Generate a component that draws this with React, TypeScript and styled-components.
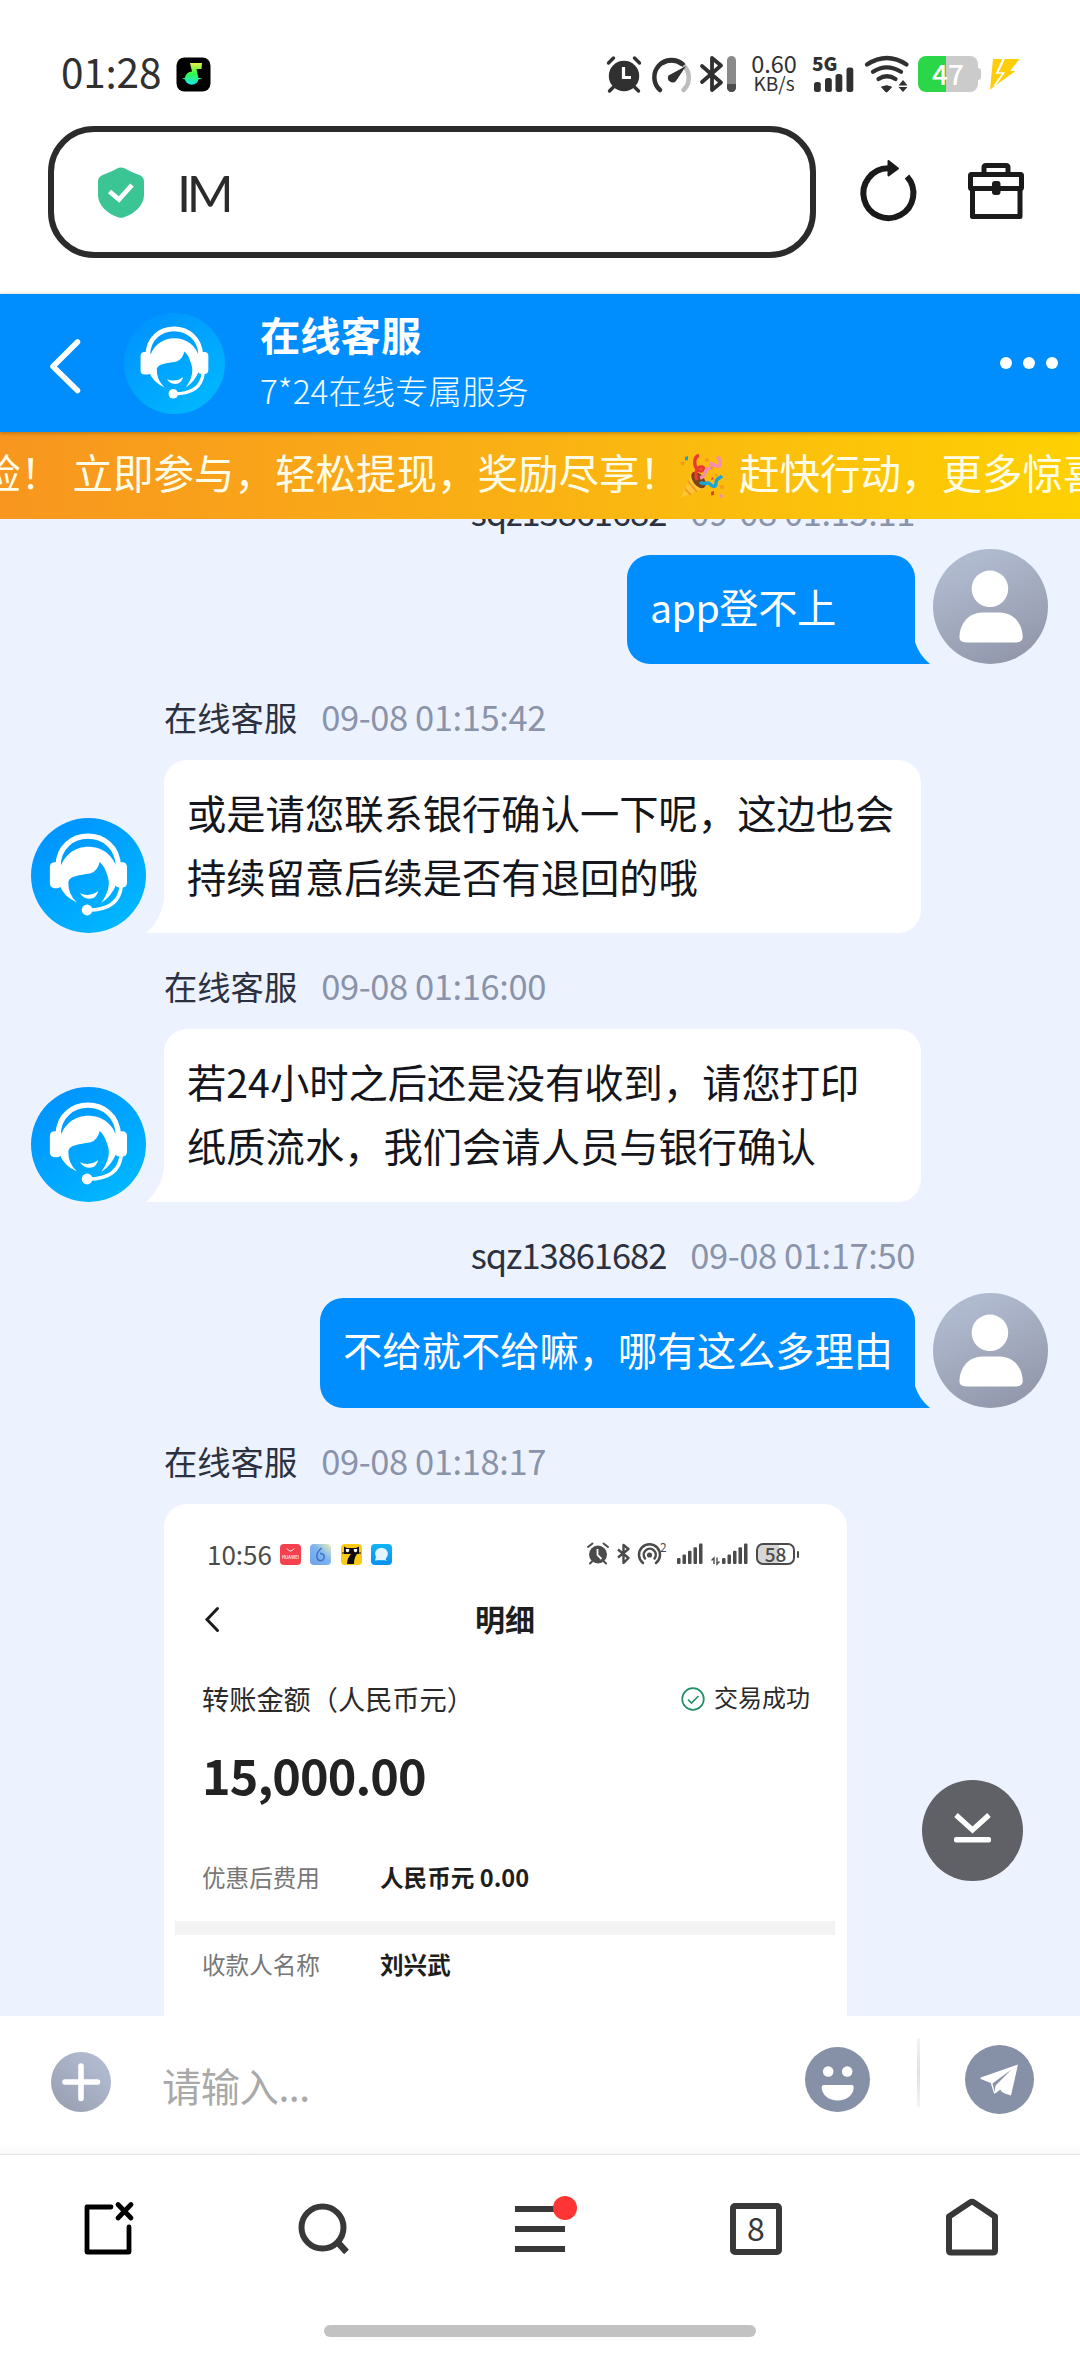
import React from "react";
import styled, { createGlobalStyle } from "styled-components";

const Global = createGlobalStyle`
  * { box-sizing: border-box; }
  body {
    margin: 0;
    background: #fff;
    font-family: "Noto Sans CJK SC", "Noto Sans", sans-serif;
    -webkit-font-smoothing: antialiased;
  }
  svg { display: block; flex: none; overflow: visible; }
`;

const Screen = styled.div`
  width: 1080px;
  height: 2358px;
  display: flex;
  flex-direction: column;
  overflow: hidden;
  background: #fff;
`;

/* ---------- shared pieces ---------- */

interface IconProps {
  box: string;
  children: React.ReactNode;
}

/* Draws at the natural size of its view box, one unit to one pixel. */
const Icon = ({ box, children }: IconProps) => {
  const [, , w, h] = box.split(" ");
  return (
    <svg width={w} height={h} viewBox={box} fill="none">
      {children}
    </svg>
  );
};

/* $lift raises the glyphs above the centre line of their row. */
const Label = styled.span<{
  $size: number;
  $color?: string;
  $weight?: number;
  $spacing?: number;
  $font?: string;
  $line?: number;
  $lift?: number;
}>`
  flex: none;
  white-space: pre;
  font-size: ${(p) => p.$size}px;
  line-height: ${(p) => (p.$line ? `${p.$line}px` : "1")};
  margin-bottom: ${(p) => (p.$lift || 0) * 2}px;
  color: ${(p) => p.$color || "#1e1e1e"};
  font-weight: ${(p) => p.$weight || 400};
  letter-spacing: ${(p) => p.$spacing || 0}px;
  font-family: ${(p) => (p.$font ? `"${p.$font}", ` : "")}"Noto Sans CJK SC", sans-serif;
`;

/* ---------- system status bar ---------- */

const StatusBar = styled.header`
  height: 126px;
  flex: none;
  display: flex;
  align-items: center;
  justify-content: space-between;
  padding: 22px 60px 0 61px;
`;

const StatusSide = styled.div`
  display: flex;
  align-items: center;
  height: 44px;
`;

const Gap = styled.div<{ $w: number }>`
  width: ${(p) => p.$w}px;
  flex: none;
`;

const Speed = styled.div`
  display: flex;
  flex-direction: column;
  align-items: center;
  width: 48px;
  padding-bottom: 3px;
`;

const INK = "#303030";

const MusicIcon = () => (
  <Icon box="177 56 35 35">
    <defs>
      <linearGradient id="note" x1="0" y1="0" x2="0" y2="1">
        <stop offset="0" stopColor="#e8f046" />
        <stop offset="0.5" stopColor="#2dfc4a" />
        <stop offset="1" stopColor="#19e6f0" />
      </linearGradient>
    </defs>
    <rect x="177.5" y="56.5" width="34" height="34" rx="8" fill="#000" />
    <path
      d="M191 62h12l-.5 6h-5l1 5 1 4h4l-4 1.500a7 7 0 0 1-13.500 0l-3-1 3-.8a7 7 0 0 1 7-6.200z"
      fill="url(#note)"
    />
  </Icon>
);

const AlarmIcon = () => (
  <Icon box="606 56 36 36">
    <circle cx="624" cy="76" r="15.200" fill={INK} />
    <path d="M608.500 63l5-5M639.500 63l-5-5M609.500 91l4-4M638.500 91l-4-4" stroke={INK} strokeWidth="3.400" strokeLinecap="round" />
    <path d="M623.500 67v10.500h7.500" stroke="#fff" strokeWidth="3.200" />
  </Icon>
);

const GaugeIcon = () => (
  <Icon box="652 56 40 36">
    <path d="M660 90a17 17 0 0 1 23-25.500" stroke={INK} strokeWidth="4.500" strokeLinecap="round" />
    <path d="M685 67a17 17 0 0 1-1.500 23" stroke="#bdbdbd" strokeWidth="4.500" strokeLinecap="round" />
    <path d="M662 63.500q11-6 20 1" stroke={INK} strokeWidth="4" />
    <path d="M686 66l-10 15a4.700 4.700 0 0 1-7.500-5.500z" fill={INK} />
  </Icon>
);

const BluetoothIcon = () => (
  <Icon box="700 56 37 36">
    <path d="M702 66l19 16.500-9 7.500v-32l9 7.500-19 16.500" stroke={INK} strokeWidth="3.800" strokeLinejoin="round" strokeLinecap="round" />
    <rect x="727" y="56" width="9" height="36" rx="4.500" fill="#8a8a8a" />
    <path d="M727 84h9v3.500a4.500 4.500 0 0 1-9 0z" fill="#4d4d4d" />
  </Icon>
);

const SignalBlock = styled.div`
  display: flex;
  flex-direction: column;
  justify-content: space-between;
  width: 43px;
  height: 36px;
`;

const SignalIcon = () => (
  <Icon box="812 72 43 20">
    {[
      [814, 82],
      [825, 78],
      [835.5, 74],
      [846.5, 67.5],
    ].map(([x, y]) => (
      <rect key={x} x={x} y={y} width="6.800" height={92 - y} rx="2.500" fill={INK} />
    ))}
  </Icon>
);

const WifiIcon = () => (
  <Icon box="865 56 44 36">
    <g stroke={INK} strokeWidth="4.200" strokeLinecap="round">
      <path d="M867 64.500q20-13 39.500 0" />
      <path d="M873 71.800q13.500-9 28 0" />
      <path d="M878.500 79q8.500-5.500 17 0" />
    </g>
    <path d="M881.500 87q5-2.500 10 0l-4 4.500q-1 1-2 0z" fill={INK} stroke={INK} />
    <path d="M903 80l4.500 5.500h-9zM903 92l4.500-5h-9z" fill={INK} />
  </Icon>
);

const Battery = styled.div`
  position: relative;
  display: flex;
  align-items: center;
  justify-content: center;
  width: 60px;
  height: 36px;
  border-radius: 8px;
  background: linear-gradient(90deg, #2bd648 0 28px, #cbcbcb 28px);
  &::after {
    content: "";
    position: absolute;
    left: 60px;
    top: 12px;
    width: 3px;
    height: 12px;
    border-radius: 0 3px 3px 0;
    background: #cbcbcb;
  }
`;

const ChargeIcon = () => (
  <Icon box="990 59 30 32">
    <path d="M993 60h9.500l-6.500 14h6.500l-12.500 16.500zM1005 60h14.500l-9.500 12h5.500l-25.500 18.500 8-10 4-6h-4z" fill="#ffcd0a" />
    <path d="M1003.500 59.500l-6.500 14.500h6.500l-9 13" stroke="#fff" strokeWidth="1.600" />
  </Icon>
);

/* ---------- browser address bar ---------- */

const AddressRow = styled.div`
  height: 168px;
  flex: none;
  display: flex;
  align-items: flex-start;
  padding-left: 48px;
`;

const AddressBox = styled.div`
  width: 768px;
  height: 132px;
  border: 6px solid #2b2b2b;
  border-radius: 46px;
  display: flex;
  align-items: center;
  padding-left: 44px;
  gap: 33px;
`;

const AddressTools = styled.div`
  display: flex;
  align-items: center;
  height: 132px;
  padding: 0 0 3px 44px;
  gap: 52px;
`;

const ShieldIcon = () => (
  <Icon box="98 167 46 50">
    <path
      d="M117 168.500q4-2 8 0c5 3.200 10 4.700 15 6.700q4 2 4 6v14c0 10-10 19-20 22q-3 1-6 0c-10-3-20-12-20-22v-14q0-4 4-6c5-2 10-3.500 15-6.700z"
      fill="#3cc594"
    />
    <path d="M109.500 191.500l9.500 8 13-14.500" stroke="#fff" strokeWidth="4.800" />
  </Icon>
);

const ReloadIcon = () => (
  <Icon box="860 160 56 61">
    <path d="M907 176.500A25 25 0 1 1 888 168.200" stroke="#1a1a1a" strokeWidth="6" strokeLinecap="butt" />
    <path d="M888.500 161l9.500 7.500-9.500 7z" fill="#1a1a1a" stroke="#1a1a1a" strokeWidth="2" strokeLinejoin="round" />
  </Icon>
);

const ToolboxIcon = () => (
  <Icon box="968 163 56 56">
    <g stroke="#1a1a1a" strokeWidth="5" strokeLinejoin="round">
      <path d="M984 174v-6.500q0-2 2-2h20q2 0 2 2v6.500" />
      <rect x="970.500" y="174.500" width="51" height="14" rx="1" />
      <path d="M972.500 188v28.500h47.500v-28.500" />
    </g>
    <rect x="992" y="181" width="8.500" height="14" rx="3" fill="#1a1a1a" />
  </Icon>
);

/* ---------- chat header ---------- */

const ChatHeader = styled.div`
  position: relative;
  z-index: 2;
  height: 138px;
  flex: none;
  display: flex;
  align-items: center;
  background: #008eff;
  padding: 0 22px 0 50px;
  box-shadow: 0 1px 4px rgba(90, 60, 0, 0.45);
`;

const HeaderText = styled.div`
  display: flex;
  flex-direction: column;
  gap: 19px;
  flex: 1;
  margin-left: 35px;
  padding-bottom: 6px;
`;

const Dots = styled.div`
  display: flex;
  gap: 11px;
`;

const Dot = styled.i`
  width: 12px;
  height: 12px;
  border-radius: 50%;
  background: #fff;
`;

const AgentAvatar = ({ size }: { size: number }) => (
  <svg width={size} height={size} viewBox="0 0 100 100" fill="none">
    <defs>
      <linearGradient id="agentBg" x1="0.200" y1="0.100" x2="0.800" y2="0.900">
        <stop offset="0" stopColor="#0095ff" />
        <stop offset="1" stopColor="#00b6ff" />
      </linearGradient>
    </defs>
    <circle cx="50" cy="50" r="50" fill="url(#agentBg)" />
    <path d="M23.500 42C24 7 75 7 76 42" stroke="#fff" strokeWidth="4.600" />
    <rect x="16.400" y="38.500" width="10.500" height="22.500" rx="4" fill="#fff" />
    <rect x="73" y="38.500" width="10.500" height="22" rx="4" fill="#fff" />
    <path
      d="M25 46C30 18 70 18 75 46L74 58Q70 68 61 74Q71 60 66 49Q63.500 41 59.700 38.200Q58 46 52 48C46 49.500 33 49.500 32.500 56Q32 66 40 73.500Q29 69 25 59z"
      fill="#fff"
    />
    <path d="M42.500 65.500q8.500 3.500 16-2-1.500 6.500-7.500 6.800-5 0-8.500-4.800z" fill="#fff" />
    <path d="M78.500 59C77 74 66 80 50 80" stroke="#fff" strokeWidth="3.200" />
    <circle cx="48.800" cy="80" r="4.700" fill="#fff" />
  </svg>
);

const UserAvatar = ({ size }: { size: number }) => (
  <svg width={size} height={size} viewBox="0 0 100 100" fill="none">
    <defs>
      <linearGradient id="userBg" x1="0.300" y1="0.100" x2="0.700" y2="1">
        <stop offset="0" stopColor="#b0bacf" />
        <stop offset="1" stopColor="#9297aa" />
      </linearGradient>
    </defs>
    <circle cx="50" cy="50" r="50" fill="url(#userBg)" />
    <circle cx="49.500" cy="34.600" r="15.900" fill="#fff" />
    <path d="M23 77c0-12 8-21.800 20-21.800h15c12 0 20 9.800 20 21.800q0 4.300-7 4.300H30q-7 0-7-4.300z" fill="#fff" />
  </svg>
);

/* ---------- promotion ticker ---------- */

const Ticker = styled.div`
  height: 87px;
  flex: none;
  display: flex;
  align-items: center;
  overflow: hidden;
  background: linear-gradient(90deg, #f8961f, #fab313 52%, #fed102);
`;

const TickerTrack = styled.div`
  display: flex;
  align-items: center;
  flex: none;
  margin-left: -20px;
`;

const PartyIcon = () => (
  <svg width="44" height="44" viewBox="0 0 44 44" fill="none">
    <path d="M1 43.500L12 19Q24 24 25 34z" fill="#ffc636" />
    <path d="M5 35l6 6M8 27l9 11" stroke="#f29d1f" strokeWidth="2" />
    <ellipse cx="18.500" cy="26" rx="5.500" ry="9.500" transform="rotate(-38 18.500 26)" fill="#7c4318" />
    <path d="M17 26C14 18 18 12 22 13s0 6-4 3S13 3 19 1.500" stroke="#ea3a31" strokeWidth="3.400" />
    <path d="M20 24c8-2 3-8 8-9s4-2 3-5 9 7 9 0-1-5-3-7" stroke="#f18fae" strokeWidth="3.400" />
    <path d="M20 28c4 4 8-1 10 2s6 4 6-1 3-4 6-7" stroke="#1ba4d8" strokeWidth="3.400" />
    <path d="M5 3l3-1v4l-3 .5z" fill="#1b9fd0" />
    <g fill="#f19a1b">
      <circle cx="2.500" cy="9.500" r="2" />
      <circle cx="27" cy="6" r="1.900" />
      <circle cx="32" cy="14" r="1.600" />
      <circle cx="42" cy="33" r="1.900" />
      <circle cx="36" cy="21" r="1.500" />
    </g>
    <path d="M31 38l3-1v4l-3 .500zM32 23l2 2-3 1z" fill="#ea3a31" />
    <circle cx="41" cy="42" r="1.900" fill="#f18fae" />
  </svg>
);

/* ---------- conversation ---------- */

const ChatStage = styled.main`
  position: relative;
  height: 1497px;
  flex: none;
  overflow: hidden;
  background: #ecf3ff;
`;

const Messages = styled.div`
  display: flex;
  flex-direction: column;
  margin-top: -60px;
`;

const Entry = styled.section<{ $mine?: boolean }>`
  display: flex;
  flex-direction: column;
  align-items: ${(p) => (p.$mine ? "flex-end" : "flex-start")};
  padding: ${(p) => (p.$mine ? "0 32px 0 0" : "0 0 0 31px")};
`;

const Meta = styled.div<{ $mine?: boolean }>`
  height: 96px;
  display: flex;
  align-items: center;
  gap: 24px;
  padding-top: 9px;
  margin: ${(p) => (p.$mine ? "0 133px 0 0" : "0 0 0 133px")};
`;

/* The avatar may stand taller than a one-line bubble without pushing the row. */
const BubbleRow = styled.div<{ $h: number }>`
  height: ${(p) => p.$h}px;
  display: flex;
  align-items: flex-end;
  gap: 18px;
`;

const Bubble = styled.div<{ $mine?: boolean; $w: number; $h: number }>`
  position: relative;
  width: ${(p) => p.$w}px;
  height: ${(p) => p.$h}px;
  display: flex;
  flex-direction: column;
  justify-content: center;
  padding: 0 23px ${(p) => (p.$mine ? 8 : 5)}px;
  border-radius: ${(p) => (p.$mine ? "23px 23px 0 23px" : "23px 23px 23px 0")};
  background: ${(p) => (p.$mine ? "#008eff" : "#fff")};
`;

const Tail = styled.svg<{ $mine?: boolean }>`
  position: absolute;
  bottom: 0;
  ${(p) => (p.$mine ? "left: calc(100% - 1px);" : "right: calc(100% - 1px);")}
`;

const BubbleTail = ({ mine }: { mine?: boolean }) =>
  mine ? (
    <Tail $mine width="16" height="22" viewBox="0 0 16 22">
      <path d="M0 0H1Q5 13 16 22H0z" fill="#008eff" />
    </Tail>
  ) : (
    <Tail width="19" height="36" viewBox="0 0 19 36">
      <path d="M19 0H18Q16 22 0 36H19z" fill="#fff" />
    </Tail>
  );

interface MessageProps {
  name: string;
  time: string;
  lines: string[];
  width: number;
  height: number;
  mine?: boolean;
  spacing?: number;
}

const MetaLine = ({ name, time, mine }: { name: string; time: string; mine?: boolean }) => (
  <Meta $mine={mine}>
    <Label $size={mine ? 34.5 : 33.3} $spacing={mine ? -1.05 : 0} $color="#2c3140">
      {name}
    </Label>
    <Label $size={34.5} $spacing={-0.4} $color="#8a93aa">
      {time}
    </Label>
  </Meta>
);

const Message = ({ name, time, lines, width, height, mine, spacing }: MessageProps) => (
  <Entry $mine={mine}>
    <MetaLine name={name} time={time} mine={mine} />
    <BubbleRow $h={height}>
      {!mine && <AgentAvatar size={115} />}
      <Bubble $mine={mine} $w={width} $h={height}>
        {lines.map((line) => (
          <Label key={line} $size={39.3} $line={64} $spacing={spacing} $color={mine ? "#fff" : "#14161c"}>
            {line}
          </Label>
        ))}
        <BubbleTail mine={mine} />
      </Bubble>
      {mine && <UserAvatar size={115} />}
    </BubbleRow>
  </Entry>
);

/* ---------- picture message: transfer receipt ---------- */

const Receipt = styled.div`
  width: 683px;
  height: 600px;
  margin-left: 133px;
  border-radius: 23px 23px 0 0;
  background: #fff;
  display: flex;
  flex-direction: column;
  padding: 0 12px 0 11px;
`;

const ReceiptStatus = styled.div`
  display: flex;
  align-items: center;
  height: 22px;
  margin-top: 39px;
  padding: 0 40px 0 32px;
`;

const Badges = styled.div`
  display: flex;
  gap: 9.300px;
  margin-left: 8px;
`;

const AppBadge = styled.div<{ $bg: string }>`
  width: 21px;
  height: 21px;
  border-radius: 4px;
  overflow: hidden;
  display: flex;
  align-items: center;
  justify-content: center;
  background: ${(p) => p.$bg};
`;

const Stretch = styled.div`
  flex: 1;
`;

const ReceiptTitle = styled.div`
  display: grid;
  grid-template-columns: 74px 1fr 74px;
  align-items: center;
  justify-items: center;
  height: 44px;
  margin-top: 32px;
`;

const ReceiptRow = styled.div<{ $top: number }>`
  display: flex;
  align-items: center;
  height: 40px;
  margin-top: ${(p) => p.$top}px;
  padding: 0 25px 0 27px;
`;

const FieldName = styled.div`
  width: 178px;
  display: flex;
`;

const Rule = styled.div`
  height: 14px;
  margin-top: 23px;
  background: #f3f3f3;
`;

const SmallBattery = styled.div`
  position: relative;
  width: 39px;
  height: 22px;
  margin-left: 8px;
  border: 2px solid #4b4b4b;
  border-radius: 7px;
  display: flex;
  align-items: center;
  justify-content: center;
  background: linear-gradient(90deg, #d6d6d6 60%, #fff 60%);
  &::after {
    content: "";
    position: absolute;
    left: 39px;
    top: 6px;
    width: 2px;
    height: 7px;
    border-radius: 1px;
    background: #4b4b4b;
  }
`;

const GREY_INK = "#4b4b4b";

const ReceiptIcons = () => (
  <Icon box="587 1543 161 22">
    <circle cx="598" cy="1554.500" r="9" fill={GREY_INK} />
    <path d="M588 1547l4.500-3.500M608 1547l-4.500-3.500M590 1563.500l2-2M606 1563.500l-2-2" stroke={GREY_INK} strokeWidth="2" strokeLinecap="round" />
    <path d="M597.500 1549v6l4 4" stroke="#fff" strokeWidth="1.800" />
    <path d="M618 1549.500l10.500 8.500-5 5v-18l5 4-10.500 8.500" stroke={GREY_INK} strokeWidth="2.400" strokeLinejoin="round" />
    <g stroke={GREY_INK} strokeWidth="2.500" strokeLinecap="round">
      <path d="M643 1563a10.500 10.500 0 1 1 13 0" />
      <path d="M645 1558.500a6 6 0 1 1 9.500 0" />
    </g>
    <circle cx="649.500" cy="1555" r="2.600" fill={GREY_INK} />
    <text x="660" y="1551.500" fontSize="12" fill={GREY_INK} fontFamily="Noto Sans CJK SC, sans-serif">
      2
    </text>
    {[0, 1, 2, 3, 4].map((i) => (
      <React.Fragment key={i}>
        <rect x={677 + i * 5.5} y={1558 - i * 3.6} width="3.500" height={6 + i * 3.6} rx="1" fill={GREY_INK} />
        <rect x={722 + i * 5.5} y={1558 - i * 3.6} width="3.500" height={6 + i * 3.6} rx="1" fill={GREY_INK} />
      </React.Fragment>
    ))}
    <path d="M714 1564v-6l-2.500 2.500M717 1557.500v6.500l2.500-2.500" stroke={GREY_INK} strokeWidth="1.400" />
  </Icon>
);

const BadgeGlyphs = {
  bag: (
    <Icon box="0 0 21 21">
      <path d="M7 4.500q3.500 5 7 0" stroke="#fff" strokeWidth="1" />
      <text x="10.500" y="14.500" fontSize="4.200" fontWeight="700" textAnchor="middle" fill="#ffd9dc" fontFamily="Inter, sans-serif">
        HUAWEI
      </text>
    </Icon>
  ),
  six: (
    <Icon box="0 0 21 21">
      <path d="M11.500 4Q6 9 7 13a3.600 3.600 0 1 0 3-3.500" stroke="#3e72c4" strokeWidth="1.500" />
    </Icon>
  ),
  cat: (
    <Icon box="0 0 21 21">
      <path d="M3 2.500l3 1.500h9l3-1.500v7.500h-2q-3 3.500-3 10H6q0-5.500 4-10H3z" fill="#0c0c0c" />
      <path d="M1 9h19" stroke="#0c0c0c" strokeWidth="1" />
      <path d="M4.800 5v1.500a1.700 1.700 0 0 0 3.400 0V5M12.800 5v1.500a1.700 1.700 0 0 0 3.400 0V5" fill="#fff" />
    </Icon>
  ),
  chat: (
    <Icon box="0 0 21 21">
      <circle cx="10.500" cy="10" r="6.300" fill="#e3f6ff" />
      <path d="M5 13l-1 3.500 5-.5zM13 14l3 2.500-5-.500z" fill="#e3f6ff" />
    </Icon>
  ),
};

/* Floats over the conversation, near its right edge. */
const ScrollDown = styled.button`
  position: absolute;
  right: 57px;
  bottom: 135px;
  width: 101px;
  height: 101px;
  padding: 0 0 4px;
  border: 0;
  border-radius: 50%;
  display: flex;
  align-items: center;
  justify-content: center;
  background: #606166;
`;

/* ---------- composer ---------- */

const Composer = styled.div`
  height: 138px;
  flex: none;
  display: flex;
  align-items: center;
  padding: 0 46px 7px 51px;
  background: linear-gradient(180deg, #fff 128px, #f8f8f8);
`;

const Placeholder = styled.div`
  flex: 1;
  display: flex;
  padding-left: 51px;
  padding-top: 6px;
`;

const Divider = styled.div`
  width: 3px;
  height: 69px;
  margin: 0 45px 18px 47px;
  background: linear-gradient(180deg, #f2f4f7, #dde2ea 50%, #f2f4f7);
`;

/* ---------- browser navigation ---------- */

const NavBar = styled.nav`
  height: 204px;
  flex: none;
  display: flex;
  flex-direction: column;
  align-items: center;
  border-top: 1px solid #e2e2e2;
  background: #fff;
`;

const NavItems = styled.div`
  width: 100%;
  height: 148px;
  display: grid;
  grid-template-columns: repeat(5, 216px);
  align-items: center;
  justify-items: center;
`;

const TabCount = styled.div`
  width: 52px;
  height: 52px;
  border: 6px solid #383838;
  border-radius: 5px;
  display: flex;
  align-items: center;
  justify-content: center;
`;

const HomeIndicator = styled.div`
  width: 432px;
  height: 12px;
  margin-top: 22px;
  border-radius: 6px;
  background: #c2c2c2;
`;

const NAV_INK = "#383838";

export default function App() {
  return (
    <Screen>
      <Global />
      <StatusBar>
        <StatusSide>
          <Label $size={40.5} $spacing={-0.2} $lift={2.5} $color={INK}>
            01:28
          </Label>
          <Gap $w={15} />
          <MusicIcon />
        </StatusSide>
        <StatusSide>
          <AlarmIcon />
          <Gap $w={10} />
          <GaugeIcon />
          <Gap $w={8} />
          <BluetoothIcon />
          <Gap $w={13} />
          <Speed>
            <Label $size={23.5} $line={19} $color={INK}>
              0.60
            </Label>
            <Label $size={19} $line={19} $color={INK}>
              KB/s
            </Label>
          </Speed>
          <Gap $w={14} />
          <SignalBlock>
            <Label $size={19} $line={13} $weight={800} $color={INK}>
              5G
            </Label>
            <SignalIcon />
          </SignalBlock>
          <Gap $w={10} />
          <WifiIcon />
          <Gap $w={9} />
          <Battery>
            <Label $size={28} $weight={500} $lift={1} $color="#fff">
              47
            </Label>
          </Battery>
          <Gap $w={12} />
          <ChargeIcon />
        </StatusSide>
      </StatusBar>

      <AddressRow>
        <AddressBox>
          <ShieldIcon />
          <Label $size={50.5} $font="Lato" $color="#2b2b2b" $spacing={-4.5} $lift={-1}>
            IM
          </Label>
        </AddressBox>
        <AddressTools>
          <ReloadIcon />
          <ToolboxIcon />
        </AddressTools>
      </AddressRow>

      <ChatHeader>
        <Icon box="50 333 30 60">
          <path d="M77.500 342L53 366.500l24.500 24" stroke="#fff" strokeWidth="5.500" strokeLinecap="round" strokeLinejoin="round" />
        </Icon>
        <Gap $w={44} />
        <AgentAvatar size={101} />
        <HeaderText>
          <Label $size={40.3} $weight={700} $color="#fff">
            在线客服
          </Label>
          <Label $size={33.4} $weight={300} $color="#f2fcff">
            7*24在线专属服务
          </Label>
        </HeaderText>
        <Dots>
          <Dot />
          <Dot />
          <Dot />
        </Dots>
      </ChatHeader>

      <Ticker>
        <TickerTrack>
          <Label $size={40.5} $line={60} $lift={3.5} $color="#fffde8">
            险！
          </Label>
          <Gap $w={11.5} />
          <Label $size={40.5} $line={60} $lift={3.5} $color="#fffde8">
            立即参与，轻松提现，奖励尽享！
          </Label>
          <PartyIcon />
          <Gap $w={15} />
          <Label $size={40.5} $line={60} $lift={3.5} $color="#fffde8">
            赶快行动，更多惊喜
          </Label>
        </TickerTrack>
      </Ticker>

      <ChatStage>
        <Messages>
          <Message mine name="sqz13861682" time="09-08 01:15:11" lines={["app登不上"]} width={288} height={109} spacing={-0.5} />
          <Message
            name="在线客服"
            time="09-08 01:15:42"
            lines={["或是请您联系银行确认一下呢，这边也会", "持续留意后续是否有退回的哦"]}
            width={757}
            height={173}
          />
          <Message
            name="在线客服"
            time="09-08 01:16:00"
            lines={["若24小时之后还是没有收到，请您打印", "纸质流水，我们会请人员与银行确认"]}
            width={757}
            height={173}
          />
          <Message mine name="sqz13861682" time="09-08 01:17:50" lines={["不给就不给嘛，哪有这么多理由"]} width={595} height={110} />
          <Entry>
            <MetaLine name="在线客服" time="09-08 01:18:17" />
            <Receipt>
              <ReceiptStatus>
                <Label $size={26} $color={GREY_INK}>
                  10:56
                </Label>
                <Badges>
                  <AppBadge $bg="#f5404e">{BadgeGlyphs.bag}</AppBadge>
                  <AppBadge $bg="linear-gradient(225deg, #e6f3b8, #7fb4f2 45%, #6ea0e8)">{BadgeGlyphs.six}</AppBadge>
                  <AppBadge $bg="#fcc915">{BadgeGlyphs.cat}</AppBadge>
                  <AppBadge $bg="linear-gradient(180deg, #12b4f6, #0790ee)">{BadgeGlyphs.chat}</AppBadge>
                </Badges>
                <Stretch />
                <ReceiptIcons />
                <SmallBattery>
                  <Label $size={19} $weight={500} $lift={0.5} $color={GREY_INK}>
                    58
                  </Label>
                </SmallBattery>
              </ReceiptStatus>
              <ReceiptTitle>
                <Icon box="205 1607 14 25">
                  <path d="M217.500 1608.500L207 1619.500l10.500 11" stroke="#1c1c1c" strokeWidth="3" strokeLinecap="round" />
                </Icon>
                <Label $size={30} $weight={700} $lift={1}>
                  明细
                </Label>
              </ReceiptTitle>
              <ReceiptRow $top={38}>
                <Label $size={27.2} $color="#2a2a2a">
                  转账金额（人民币元）
                </Label>
                <Stretch />
                <Icon box="681 1686 24 24">
                  <circle cx="693" cy="1698" r="10.800" stroke="#238f66" strokeWidth="1.700" />
                  <path d="M688 1698.500l3.500 3.500 7-7" stroke="#238f66" strokeWidth="1.700" />
                </Icon>
                <Gap $w={9} />
                <Label $size={24} $lift={2} $color="#2a2a2a">
                  交易成功
                </Label>
              </ReceiptRow>
              <ReceiptRow $top={37}>
                <Label $size={48.5} $weight={700} $spacing={-0.9} $lift={1.5} $color="#222">
                  15,000.00
                </Label>
              </ReceiptRow>
              <ReceiptRow $top={62}>
                <FieldName>
                  <Label $size={23.6} $color="#777">
                    优惠后费用
                  </Label>
                </FieldName>
                <Label $size={23.6} $weight={700}>
                  人民币元 0.00
                </Label>
              </ReceiptRow>
              <Rule />
              <ReceiptRow $top={10}>
                <FieldName>
                  <Label $size={23.6} $color="#777">
                    收款人名称
                  </Label>
                </FieldName>
                <Label $size={23.6} $weight={700}>
                  刘兴武
                </Label>
              </ReceiptRow>
            </Receipt>
          </Entry>
        </Messages>
        <ScrollDown>
          <Icon box="953 1813 39 32">
            <path d="M956 1815l16.500 15L989 1815" stroke="#fff" strokeWidth="5.200" />
            <rect x="954" y="1837" width="37" height="5.500" rx="2" fill="#fff" />
          </Icon>
        </ScrollDown>
      </ChatStage>

      <Composer>
        <Icon box="0 0 60 60">
          <defs>
            <linearGradient id="plusBg" x1="0.850" y1="0.100" x2="0.150" y2="0.900">
              <stop offset="0" stopColor="#b2bcd2" />
              <stop offset="1" stopColor="#9ba1b4" />
            </linearGradient>
          </defs>
          <circle cx="30" cy="30" r="30" fill="url(#plusBg)" />
          <path d="M30 14v32.500M14 30h32.500" stroke="#fff" strokeWidth="5.600" strokeLinecap="round" />
        </Icon>
        <Placeholder>
          <Label $size={39.3} $spacing={-0.5} $color="#a9a9a9">
            请输入...
          </Label>
        </Placeholder>
        <Icon box="0 0 65 69">
          <circle cx="32.500" cy="32.500" r="32.500" fill="#8690a6" />
          <circle cx="23.200" cy="24.500" r="5.300" fill="#fff" />
          <circle cx="42.200" cy="24.500" r="5.300" fill="#fff" />
          <path d="M18.500 38h28.500q2 0 1.700 2.500a16 13 0 0 1-32 0q-.2-2.500 1.800-2.500z" fill="#fff" />
        </Icon>
        <Divider />
        <Icon box="965 2045 69 73">
          <circle cx="999.500" cy="2079.500" r="34.500" fill="#8690a6" />
          <path d="M1018 2064.500l-7 31q-11-3-10.500-6l-5.500 4q-1 .5-1.300-1l-3-9.500-10-4q-1-.8 0-1.500z" fill="#fff" />
          <path d="M1011.500 2069.500l-19 14 2.200 8.500.8-6.500z" fill="#8690a6" />
        </Icon>
      </Composer>

      <NavBar>
        <NavItems>
          <Icon box="82 2201 52 56">
            <path d="M111 2207H87v45h42v-25" stroke="#000" strokeWidth="4.800" strokeLinecap="round" strokeLinejoin="round" />
            <path d="M118 2204.500l13 13.500M131 2204.500l-13 13.500" stroke="#000" strokeWidth="4.800" strokeLinecap="round" />
          </Icon>
          <Icon box="298 2202 52 54">
            <circle cx="322.500" cy="2227.500" r="21" stroke={NAV_INK} strokeWidth="6" />
            <path d="M337 2241.500l9.500 10.500" stroke={NAV_INK} strokeWidth="6.500" />
          </Icon>
          <Icon box="514 2202 52 54">
            <path d="M515 2209h50M515 2229h50M515 2249h50" stroke={NAV_INK} strokeWidth="6" />
            <circle cx="565" cy="2208" r="12" fill="#ff3535" />
          </Icon>
          <TabCount>
            <Label $size={32} $lift={2} $color={NAV_INK}>
              8
            </Label>
          </TabCount>
          <Icon box="946 2201 52 56">
            <path d="M949 2216.500l21-14q2-1.300 4 0l21 14v34q0 2-2 2h-42q-2 0-2-2z" stroke={NAV_INK} strokeWidth="6" strokeLinejoin="round" />
          </Icon>
        </NavItems>
        <HomeIndicator />
      </NavBar>
    </Screen>
  );
}
